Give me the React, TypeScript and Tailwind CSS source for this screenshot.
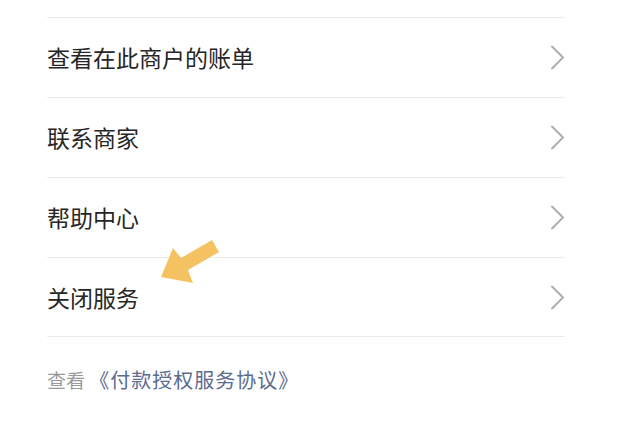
import React from "react";

const rows = ["查看在此商户的账单", "联系商家", "帮助中心", "关闭服务"];

function Chevron() {
  return (
    <svg width="15" height="25" viewBox="0 0 15 25" fill="none">
      <polyline
        points="2,1.5 13,12.5 2,23.5"
        stroke="#adadad"
        strokeWidth="2"
        strokeLinecap="round"
        strokeLinejoin="round"
      />
    </svg>
  );
}

export default function App() {
  return (
    <div
      className="relative w-[640px] h-[426px] bg-white overflow-hidden"
      style={{ fontFamily: '"Noto Sans CJK SC", "Noto Sans", sans-serif' }}
    >
      <div className="pt-[17px] pl-[47px] pr-[75px]">
        {rows.map((label, i) => (
          <div
            key={label}
            className={`flex items-center justify-between h-[80px] border-t border-[#ebebeb] ${
              i === rows.length - 1 ? "border-b" : ""
            }`}
          >
            <span className="text-[23px] text-[#262626]">{label}</span>
            <Chevron />
          </div>
        ))}
        <div className="mt-[30px] leading-[26px]">
          <span className="text-[19px] text-[#9a9a9a]">查看 </span>
          <span className="text-[20px] tracking-[1px] text-[#5b6b8f]">《付款授权服务协议》</span>
        </div>
      </div>

      {/* yellow annotation arrow */}
      <svg
        className="absolute left-0 top-0 pointer-events-none"
        width="640"
        height="426"
        viewBox="0 0 640 426"
      >
        <polygon
          points="161,277 173,248 181,258 212,240 219,252 188,270 193,283"
          fill="#f5c262"
        />
      </svg>
    </div>
  );
}
